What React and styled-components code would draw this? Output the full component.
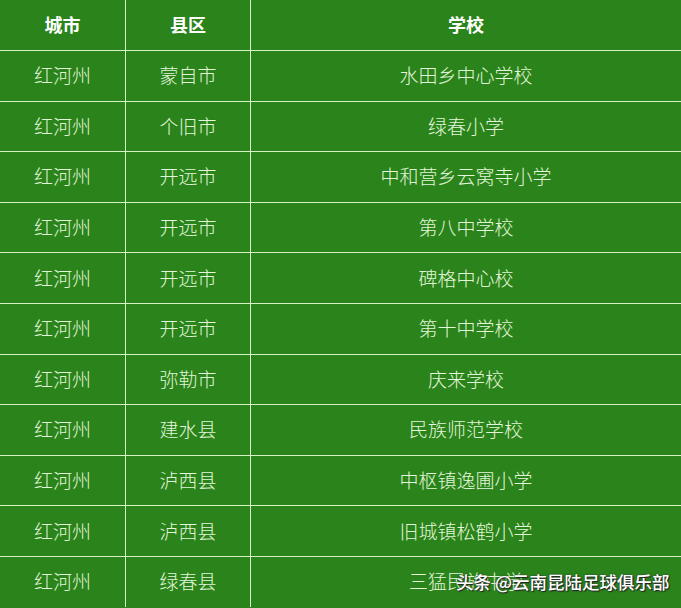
import React from 'react';
import styled, { createGlobalStyle } from 'styled-components';

const GlobalStyle = createGlobalStyle`
  html, body {
    margin: 0;
    padding: 0;
    background-color: #2a841b;
  }
  body {
    font-family: "Noto Sans CJK SC", "Noto Sans", sans-serif;
  }
`;

const Page = styled.div`
  position: relative;
  width: 681px;
  height: 608px;
  overflow: hidden;
  background-color: #2a841b;
`;

const Row = styled.div`
  display: grid;
  grid-template-columns: 125px 125px 1fr;
  height: ${props => props.header ? '50px' : '50.6px'};
  box-sizing: border-box;
  border-top: ${props => props.header ? 'none' : 'solid 1px #d6f3c6'};
`;

const Cell = styled.div`
  display: flex;
  align-items: center;
  justify-content: center;
  box-sizing: border-box;
  padding-bottom: 2px;
  border-left: ${props => props.first ? 'none' : 'solid 1px #d6f3c6'};
  font-size: ${props => props.header ? '18px' : '19px'};
  font-weight: ${props => props.header ? 'bold' : '300'};
  color: ${props => props.header ? '#ffffff' : '#e4f6da'};
  white-space: nowrap;
`;

const Watermark = styled.div`
  position: absolute;
  left: 456px;
  top: 569px;
  font-size: 17.5px;
  font-weight: 500;
  color: #ffffff;
  white-space: nowrap;
  text-shadow: 1px 1px 1px #222, 0 0 2px #333;
`;

const rows = [
  ['红河州', '蒙自市', '水田乡中心学校'],
  ['红河州', '个旧市', '绿春小学'],
  ['红河州', '开远市', '中和营乡云窝寺小学'],
  ['红河州', '开远市', '第八中学校'],
  ['红河州', '开远市', '碑格中心校'],
  ['红河州', '开远市', '第十中学校'],
  ['红河州', '弥勒市', '庆来学校'],
  ['红河州', '建水县', '民族师范学校'],
  ['红河州', '泸西县', '中枢镇逸圃小学'],
  ['红河州', '泸西县', '旧城镇松鹤小学'],
  ['红河州', '绿春县', '三猛民族中学']
];

export default function App() {
  return (
    <Page>
      <GlobalStyle />
      <Row header>
        <Cell header first>城市</Cell>
        <Cell header>县区</Cell>
        <Cell header>学校</Cell>
      </Row>
      {rows.map((r, i) => (
        <Row key={i}>
          <Cell first>{r[0]}</Cell>
          <Cell>{r[1]}</Cell>
          <Cell>{r[2]}</Cell>
        </Row>
      ))}
      <Watermark>头条 @云南昆陆足球俱乐部</Watermark>
    </Page>
  );
}
